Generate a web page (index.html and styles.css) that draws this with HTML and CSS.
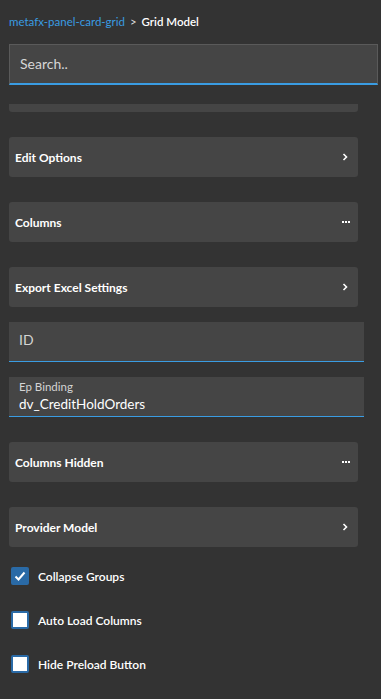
FILE: index.html
```html
<!DOCTYPE html>
<html lang="en">
<head>
  <meta charset="UTF-8">
  <meta name="viewport" content="width=device-width, initial-scale=1.0">
  <title>Grid Model</title>
  <link rel="stylesheet" href="styles.css">
</head>
<body>
  <div class="panel">
    <div class="crumbs">
      <a href="#">metafx-panel-card-grid</a>
      <span class="sep">&gt;</span>
      <span class="current">Grid Model</span>
    </div>
    <div class="search">
      <input type="text" placeholder="Search..">
    </div>

    <div class="props">
      <div class="card stub"></div>

      <div class="card">
        <span>Edit Options</span>
        <svg class="chev" width="6" height="8" viewBox="0 0 6 8"><path d="M1.5 1 L4.5 4 L1.5 7" fill="none" stroke="#fff" stroke-width="1.6"/></svg>
      </div>
      <div class="card">
        <span>Columns</span>
        <span class="dots"><i></i><i></i><i></i></span>
      </div>
      <div class="card">
        <span>Export Excel Settings</span>
        <svg class="chev" width="6" height="8" viewBox="0 0 6 8"><path d="M1.5 1 L4.5 4 L1.5 7" fill="none" stroke="#fff" stroke-width="1.6"/></svg>
      </div>

      <div class="fields">
        <div class="field empty">
          <label>ID</label>
        </div>
        <div class="field">
          <label>Ep Binding</label>
          <div class="value">dv_CreditHoldOrders</div>
        </div>
      </div>

      <div class="card">
        <span>Columns Hidden</span>
        <span class="dots"><i></i><i></i><i></i></span>
      </div>
      <div class="card">
        <span>Provider Model</span>
        <svg class="chev" width="6" height="8" viewBox="0 0 6 8"><path d="M1.5 1 L4.5 4 L1.5 7" fill="none" stroke="#fff" stroke-width="1.6"/></svg>
      </div>

      <div class="checks">
        <label class="check">
          <span class="box on"><svg width="14" height="14" viewBox="0 0 14 14"><path d="M2.5 7.5 L5.5 10.5 L11.5 3.5" fill="none" stroke="#fff" stroke-width="2"/></svg></span>
          Collapse Groups
        </label>
        <label class="check">
          <span class="box"></span>
          Auto Load Columns
        </label>
        <label class="check">
          <span class="box"></span>
          Hide Preload Button
        </label>
      </div>
    </div>
  </div>
</body>
</html>
```

FILE: styles.css
```css
body {
  margin: 0;
  background: #333;
  color: #fff;
  font-family: Lato, "Liberation Sans", sans-serif;
}
.panel {
  padding: 14px 3px 0 9px;
}
.crumbs {
  font-size: 11.5px;
  line-height: 16px;
  height: 16px;
}
.crumbs a {
  color: #3a9ce2;
  text-decoration: none;
}
.crumbs .sep {
  color: #ddd;
  margin: 0 2px;
}
.crumbs .current {
  color: #fff;
  font-weight: 600;
}
.search {
  margin-top: 14px;
}
.search input {
  display: block;
  box-sizing: border-box;
  width: 100%;
  height: 41px;
  margin: 0;
  padding: 0 10px 2px;
  background: #454545;
  border: 1px solid #5a5a5a;
  border-bottom: 2px solid #3a9ce2;
  color: #ddd;
  font-family: inherit;
  font-size: 14px;
  outline: none;
}
.search input::placeholder {
  color: #d6d6d6;
}
.props {
  display: flex;
  flex-direction: column;
  gap: 25px;
  margin-top: 19px;
  width: 349px;
}
.card {
  display: flex;
  align-items: center;
  justify-content: space-between;
  height: 40px;
  padding: 0 8px 0 6px;
  background: #454545;
  border-radius: 3px;
  font-size: 12px;
  font-weight: 700;
}
.card.stub {
  height: 8px;
  border-radius: 0 0 3px 3px;
}
.chev {
  margin-right: 2px;
}
.dots {
  display: flex;
  gap: 1px;
}
.dots i {
  width: 2px;
  height: 2px;
  background: #fff;
}
.fields {
  display: flex;
  flex-direction: column;
  gap: 15px;
  margin-top: -10px;
}
.field {
  width: 355px;
  box-sizing: border-box;
  height: 40px;
  padding: 2px 10px 0;
  background: #454545;
  border-bottom: 1px solid #3a9ce2;
}
.field label {
  display: block;
  font-size: 11.5px;
  line-height: 16px;
  color: #d4d4d4;
}
.field.empty label {
  font-size: 14px;
  line-height: 28px;
  padding-top: 2px;
}
.field .value {
  font-size: 13.5px;
  line-height: 18px;
  color: #fff;
}
.checks {
  display: flex;
  flex-direction: column;
  gap: 26px;
  margin-top: -5px;
  padding-left: 2px;
}
.check {
  display: flex;
  align-items: center;
  gap: 9px;
  height: 18px;
  font-size: 12px;
  font-weight: 600;
}
.box {
  box-sizing: border-box;
  display: flex;
  align-items: center;
  justify-content: center;
  width: 18px;
  height: 18px;
  border: 2px solid #2a6aa6;
  border-radius: 2px;
  background: #fff;
}
.box.on {
  background: #2a6aa6;
}
```
